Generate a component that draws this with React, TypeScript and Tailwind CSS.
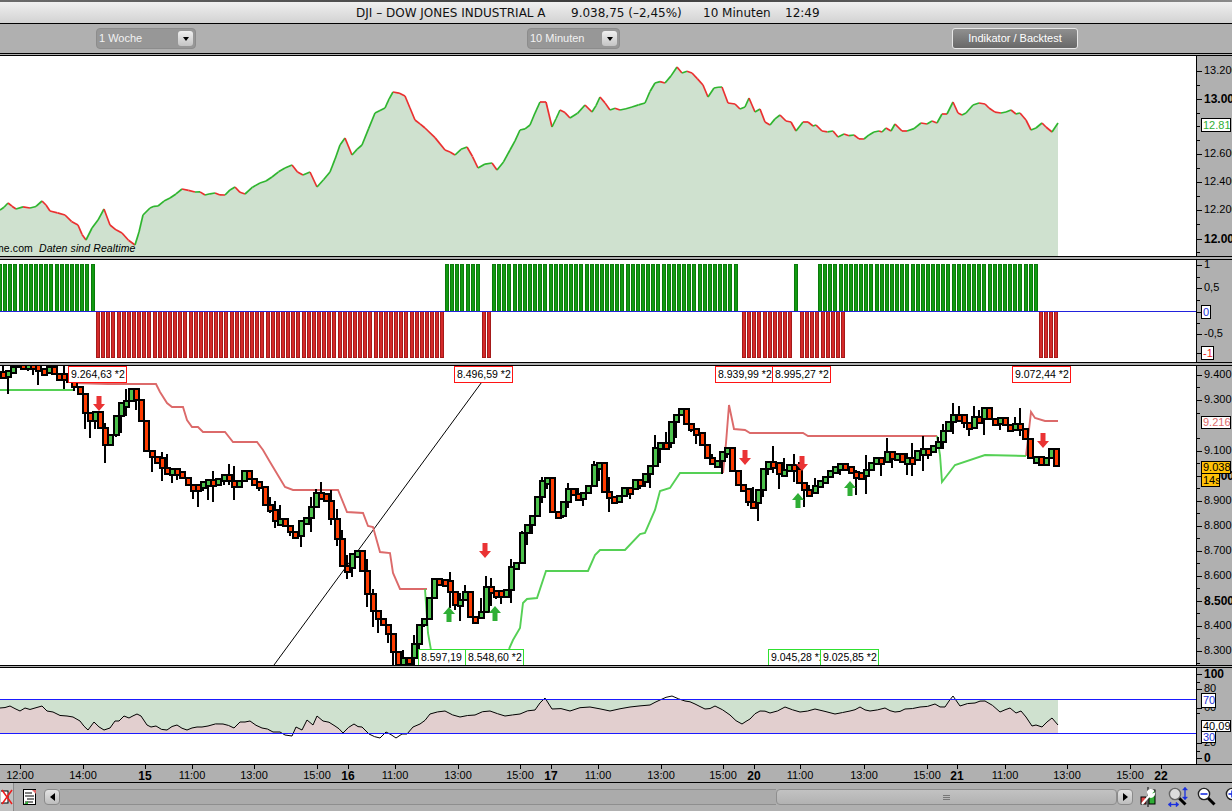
import type { ReactNode } from "react";

// chart data is in page pixels, each svg viewBox just maps to the pane's y range
type Pt = [number, number];

const PRICE: Pt[] = [
  [0, 210], [8, 203], [16, 209], [30, 208], [42, 201], [50, 211], [65, 215], [78, 225], [86, 240], [92, 228], [104, 209], [110, 225],
  [122, 233], [135, 245], [143, 215], [150, 208], [158, 206], [170, 198], [182, 189], [195, 192], [205, 195], [215, 193], [225, 195],
  [235, 187], [245, 194], [260, 183], [272, 177], [285, 168], [292, 165], [303, 175], [310, 172], [317, 187], [330, 172], [340, 145],
  [345, 138], [352, 155], [362, 145], [375, 113], [385, 108], [393, 92], [405, 96], [415, 120], [425, 128], [445, 150], [455, 155],
  [467, 147], [478, 168], [492, 163], [497, 170], [510, 150], [520, 130], [530, 125], [540, 102], [546, 102], [552, 127], [560, 110],
  [570, 118], [585, 105], [592, 112], [600, 97], [610, 110], [620, 110], [632, 107], [645, 103], [655, 83], [665, 83], [677, 67],
  [682, 73], [692, 73], [703, 85], [708, 97], [714, 88], [722, 87], [728, 103], [735, 104], [740, 109], [745, 107], [749, 98],
  [755, 112], [760, 109], [765, 122], [770, 125], [780, 115], [786, 121], [791, 122], [796, 131], [803, 122], [808, 122], [813, 126],
  [816, 125], [822, 131], [833, 131], [838, 137], [844, 134], [854, 135], [864, 139], [874, 132], [879, 131], [882, 132], [886, 128],
  [891, 131], [895, 124], [902, 131], [907, 131], [921, 123], [927, 124], [932, 121], [937, 123], [942, 114], [947, 114], [953, 102],
  [958, 113], [966, 113], [973, 105], [979, 103], [985, 104], [989, 108], [1001, 113], [1011, 110], [1016, 114], [1020, 113], [1026, 120],
  [1031, 130], [1036, 128], [1042, 123], [1046, 127], [1052, 132], [1058, 123],
];

const CLOSES: Pt[] = [
  [0, 372], [20, 364], [40, 366], [60, 372], [72, 378], [80, 392], [88, 430], [94, 408], [99, 422], [104, 450], [109, 443], [114, 417],
  [124, 399], [131, 392], [137, 399], [146, 448], [150, 450], [155, 458], [165, 475], [175, 465], [185, 487], [195, 485], [205, 483],
  [215, 480], [225, 478], [235, 490], [245, 473], [258, 480], [265, 503], [275, 520], [285, 525], [292, 538], [302, 520], [310, 510],
  [318, 493], [325, 495], [332, 525], [340, 555], [345, 580], [350, 560], [358, 550], [366, 590], [375, 620], [385, 625], [392, 650],
  [398, 662], [405, 660], [412, 650], [418, 630], [425, 620], [432, 578], [440, 578], [448, 583], [452, 605], [458, 600], [465, 590],
  [470, 615], [480, 613], [487, 577], [492, 590], [500, 595], [505, 600], [510, 570], [518, 565], [522, 530], [530, 520], [540, 482],
  [548, 482], [555, 528], [565, 490], [575, 495], [585, 495], [592, 470], [600, 465], [605, 495], [615, 498], [625, 490], [640, 482],
  [650, 470], [655, 450], [665, 440], [675, 415], [682, 410], [690, 430], [700, 440], [706, 460], [715, 468], [722, 455], [728, 452],
  [735, 480], [742, 490], [750, 512], [757, 490], [765, 465], [775, 460], [780, 477], [790, 465], [797, 470], [802, 495], [810, 490],
  [820, 483], [828, 472], [840, 465], [850, 470], [862, 472], [875, 462], [890, 455], [902, 460], [910, 457], [920, 450], [935, 445],
  [945, 430], [955, 410], [965, 428], [975, 420], [985, 410], [995, 420], [1005, 425], [1020, 428], [1026, 440], [1031, 460], [1036, 457],
  [1041, 465], [1046, 458], [1051, 449], [1056, 466],
];

const RED_STOP: Pt[][] = [
  [[72, 383], [108, 384], [156, 384], [160, 392], [167, 403], [172, 407], [183, 407], [187, 420], [192, 427], [198, 427], [203, 432], [225, 432],
    [233, 442], [257, 442], [263, 450], [270, 462], [285, 487], [293, 490], [338, 490], [347, 512], [363, 513], [368, 526], [373, 527], [380, 552],
    [390, 553], [393, 573], [400, 589], [427, 589]],
  [[723, 473], [726, 443], [729, 405], [734, 429], [745, 430], [750, 433], [803, 433], [808, 436], [937, 436]],
  [[1026, 456], [1031, 412], [1035, 418], [1045, 421], [1058, 421]],
];

const GREEN_STOP: Pt[][] = [
  [[0, 390], [73, 390]],
  [[425, 589], [428, 633], [431, 650], [431, 665]],
  [[509, 649], [513, 640], [520, 628], [523, 603], [527, 599], [537, 598], [546, 571], [588, 571], [595, 555], [600, 550], [625, 550], [640, 534],
    [645, 533], [655, 510], [660, 491], [670, 488], [680, 473], [723, 473]],
  [[937, 436], [940, 455], [942, 482], [955, 465], [985, 455], [1026, 456]],
];

const OSC: Pt[] = [
  [0, 709], [10, 707], [20, 712], [25, 709], [35, 709], [42, 707], [47, 712], [53, 713], [67, 717], [73, 718], [80, 722], [88, 731], [94, 723],
  [104, 731], [110, 729], [115, 722], [119, 722], [124, 717], [129, 719], [137, 715], [141, 717], [147, 726], [151, 728], [156, 727], [167, 731],
  [177, 726], [187, 731], [197, 728], [202, 728], [208, 727], [223, 725], [234, 729], [240, 723], [250, 722], [262, 729], [273, 733], [280, 733],
  [285, 736], [292, 737], [296, 728], [302, 731], [307, 721], [313, 726], [317, 717], [323, 722], [335, 727], [343, 734], [354, 725], [362, 728],
  [369, 735], [380, 739], [386, 733], [396, 739], [402, 735], [407, 735], [413, 728], [420, 725], [430, 715], [445, 712], [460, 718], [475, 716],
  [490, 712], [505, 717], [520, 715], [535, 711], [545, 699], [552, 710], [570, 712], [590, 708], [610, 712], [630, 708], [650, 706], [660, 701],
  [672, 697], [685, 702], [695, 705], [705, 710], [715, 707], [730, 716], [742, 725], [750, 720], [760, 712], [770, 714], [785, 708], [800, 713],
  [815, 710], [835, 715], [850, 712], [860, 708], [870, 712], [885, 709], [895, 713], [905, 710], [920, 708], [935, 705], [945, 708], [953, 697],
  [960, 707], [975, 704], [985, 702], [1000, 713], [1010, 709], [1016, 714], [1021, 712], [1026, 718], [1032, 727], [1036, 726], [1042, 728],
  [1052, 719], [1058, 726],
];

const BAR_STEP = 5.14;
// green (top) and red (bottom) runs overlap at 818-845, that is how the reference has it
const BAR_RANGES: { from: number; to: number; up: boolean }[] = [
  { from: -2, to: 95, up: true },
  { from: 96, to: 444, up: false },
  { from: 445, to: 481, up: true },
  { from: 482, to: 491, up: false },
  { from: 492, to: 741, up: true },
  { from: 742, to: 793, up: false },
  { from: 794, to: 798, up: true },
  { from: 800, to: 845, up: false },
  { from: 818, to: 1038, up: true },
  { from: 1039, to: 1059, up: false },
];

function toPoints(p: Pt[]) {
  return p.map(([x, y]) => `${x},${y}`).join(" ");
}

function interp(p: Pt[], x: number) {
  for (let i = 1; i < p.length; i++) {
    if (x <= p[i][0]) {
      const [x0, y0] = p[i - 1];
      const [x1, y1] = p[i];
      return y0 + ((y1 - y0) * (x - x0)) / (x1 - x0);
    }
  }
  return p[p.length - 1][1];
}

function noise(i: number) {
  const s = Math.sin(i * 127.1 + 11.7) * 43758.5453;
  return s - Math.floor(s);
}

// long segments get a midpoint so the line is as jagged as the real one
function roughen(p: Pt[], amp: number) {
  const out: Pt[] = [];
  p.forEach(([x, y], i) => {
    if (i > 0) {
      const [px, py] = p[i - 1];
      if (x - px > 7) {
        out.push([(x + px) / 2, (y + py) / 2 + (noise(i) - 0.5) * amp]);
      }
    }
    out.push([x, y]);
  });
  return out;
}

function buildCandles() {
  const out: { x: number; top: number; bottom: number; hi: number; lo: number; up: boolean }[] = [];
  let prev = interp(CLOSES, 0);
  for (let x = 2.5; x < 1058; x += BAR_STEP) {
    const i = out.length;
    // the last few candles are read straight off the picture, no jitter
    const close = Math.round(interp(CLOSES, x) + (x > 1022 ? 0 : (noise(i) - 0.5) * 9));
    const up = close < prev;
    const top = Math.round(Math.min(prev, close));
    let bottom = Math.round(Math.max(prev, close));
    if (bottom - top < 6) bottom = top + 6;
    const hi = top - (x < 1022 && noise(i + 300) > 0.6 ? noise(i + 600) * 16 : 1);
    const lo = bottom + (x < 1022 && noise(i + 900) > 0.55 ? noise(i + 1200) * 18 : 1);
    out.push({ x: Math.round(x), top, bottom, hi, lo, up });
    prev = close;
  }
  return out;
}

function buildBars() {
  const out: { x: number; up: boolean }[] = [];
  for (const r of BAR_RANGES) {
    for (let x = r.from; x + 3.5 <= r.to; x += BAR_STEP) {
      out.push({ x: Math.round(x), up: r.up });
    }
  }
  return out;
}

function Tag({ left, width, top, red, children }: { left: number; width: number; top: number; red?: boolean; children: ReactNode }) {
  return (
    <div
      className={`absolute flex h-[17px] items-center overflow-hidden whitespace-nowrap border bg-white pl-[2px] text-[10.5px] leading-none text-black ${red ? "border-[#ff1414]" : "border-[#30e030]"}`}
      style={{ left, width, top }}
    >
      {children}
    </div>
  );
}

function Arrow({ x, y, up }: { x: number; y: number; up?: boolean }) {
  // x is the centre, y the top of the 15px arrow
  const pts = up
    ? `${x},${y} ${x + 6},${y + 7} ${x + 2.5},${y + 7} ${x + 2.5},${y + 15} ${x - 2.5},${y + 15} ${x - 2.5},${y + 7} ${x - 6},${y + 7}`
    : `${x},${y + 15} ${x + 6},${y + 8} ${x + 2.5},${y + 8} ${x + 2.5},${y} ${x - 2.5},${y} ${x - 2.5},${y + 8} ${x - 6},${y + 8}`;
  return <polygon points={pts} fill={up ? "#2fae35" : "#ea3334"} />;
}

function AxisLabel({ y, bold, children }: { y: number; bold?: boolean; children: ReactNode }) {
  return (
    <>
      <div className="absolute left-0 h-px w-[5px] bg-black" style={{ top: y }} />
      <div
        className={`absolute left-[7px] whitespace-nowrap leading-none text-black ${bold ? "text-[12px] font-bold" : "text-[11px]"}`}
        style={{ top: y - 6 }}
      >
        {children}
      </div>
    </>
  );
}

function Tick({ y }: { y: number }) {
  return <div className="absolute left-0 h-px w-[3px] bg-black" style={{ top: y }} />;
}

function AxisTag({ y, h, w, color, bg, children }: { y: number; h: number; w: number; color: string; bg?: string; children: ReactNode }) {
  return (
    <div
      className="absolute left-[4px] flex items-center overflow-hidden whitespace-nowrap border border-black pl-px text-[11px] leading-none"
      style={{ top: y, height: h, width: w, color, background: bg ?? "#fff" }}
    >
      {children}
    </div>
  );
}

// y values are page pixels, the axis column starts at pane top
function Pane({ height, top, axis, children }: { height: number; top: number; axis: ReactNode; children: ReactNode }) {
  return (
    <div className="flex border-y border-black" style={{ height }}>
      <div className="relative w-[1197px] overflow-hidden border-r border-black bg-white">{children}</div>
      <div className="relative flex-1 overflow-hidden">
        <div className="absolute left-0 w-full" style={{ top: -top, height: 900 }}>
          {axis}
        </div>
      </div>
    </div>
  );
}

function Select({ label, className }: { label: string; className: string }) {
  return (
    <div className={`flex h-[21px] items-center justify-between rounded-[4px] border border-[#8c8c8c] bg-[#979797] pl-[2px] pr-[2px] text-[11px] text-[#f2f2f2] ${className}`}>
      <span>{label}</span>
      <span className="flex h-[15px] w-[15px] items-center justify-center rounded-[3px] bg-gradient-to-b from-[#f0f0f0] to-[#c4c4c4]">
        <span className="h-0 w-0 border-x-[3px] border-t-[4px] border-x-transparent border-t-black" />
      </span>
    </div>
  );
}

const TIMES: { x: number; t: string; bold?: boolean }[] = [
  { x: 20, t: "12:00" }, { x: 83, t: "14:00" }, { x: 145, t: "15", bold: true }, { x: 192, t: "11:00" }, { x: 254, t: "13:00" }, { x: 317, t: "15:00" },
  { x: 348, t: "16", bold: true }, { x: 395, t: "11:00" }, { x: 458, t: "13:00" }, { x: 520, t: "15:00" }, { x: 551, t: "17", bold: true }, { x: 598, t: "11:00" },
  { x: 661, t: "13:00" }, { x: 723, t: "15:00" }, { x: 754, t: "20", bold: true }, { x: 800, t: "11:00" }, { x: 864, t: "13:00" }, { x: 927, t: "15:00" },
  { x: 957, t: "21", bold: true }, { x: 1005, t: "11:00" }, { x: 1067, t: "13:00" }, { x: 1130, t: "15:00" }, { x: 1161, t: "22", bold: true },
];

function ScrollArrow({ dir }: { dir: "left" | "right" }) {
  return (
    <div className="flex h-[16px] w-[16px] shrink-0 items-center justify-center rounded-[4px] border border-[#8a8a8a] bg-gradient-to-b from-[#e4e4e4] to-[#bdbdbd]">
      <span className={`h-0 w-0 border-y-[4px] border-y-transparent ${dir === "left" ? "border-r-[5px] border-r-black" : "border-l-[5px] border-l-black"}`} />
    </div>
  );
}

function Magnifier({ sign }: { sign: "arrows" | "minus" | "plus" }) {
  const grey = sign === "arrows";
  return (
    <svg width="22" height="20" viewBox="0 0 22 20" className="shrink-0">
      <line x1="11" y1="11" x2="17.5" y2="17.5" stroke="#000" strokeWidth="3" />
      <circle cx="7" cy="7" r="5.6" fill={grey ? "#dcdcdc" : "#fff"} stroke={grey ? "#666" : "#222"} strokeWidth="1.4" />
      {sign !== "arrows" && <line x1="3.5" y1="7" x2="10.5" y2="7" stroke="#1a2fe0" strokeWidth="1.6" />}
      {sign === "plus" && <line x1="7" y1="3.5" x2="7" y2="10.5" stroke="#1a2fe0" strokeWidth="1.6" />}
      {grey && (
        <g stroke="#1a2fe0" strokeWidth="1.3" fill="#1a2fe0">
          <line x1="1" y1="17.5" x2="10" y2="17.5" />
          <path d="M0 17.5 L3 15 V20 Z M11 17.5 L8 15 V20 Z" strokeWidth="0.4" />
          <line x1="17" y1="1" x2="17" y2="12" />
          <path d="M17 0 L14.5 3 H19.5 Z M17 13 L14.5 10 H19.5 Z" strokeWidth="0.4" />
        </g>
      )}
    </svg>
  );
}

export default function App() {
  const candles = buildCandles();
  const bars = buildBars();
  const price = roughen(PRICE, 4);
  const osc = roughen(OSC, 3);
  const priceArea = `0,257 ${toPoints(price)} 1058,257`;
  const oscArea = `0,740 ${toPoints(osc)} 1058,740`;

  return (
    <div className="flex h-[811px] w-[1232px] flex-col overflow-hidden bg-[#b0b0b0] font-['Liberation_Sans',Arial,sans-serif]">
      {/* window title */}
      <div className="h-[2px] bg-gradient-to-r from-[#6b6b6b] via-[#3a3a3a] to-[#8a8a8a]" />
      <div className="flex h-[22px] items-center whitespace-pre border-b border-black bg-gradient-to-b from-[#f0f0f0] to-[#d2d2d2] pl-[356px] font-['DejaVu_Sans',sans-serif] text-[12px] text-[#111]">
        <span className="w-[215px] shrink-0">DJI – DOW JONES INDUSTRIAL A</span>
        <span className="w-[132px] shrink-0">9.038,75 (–2,45%)</span>
        <span className="w-[82px] shrink-0">10 Minuten</span>
        <span>12:49</span>
      </div>

      {/* toolbar */}
      <div className="flex h-[30px] items-center border-b border-black pl-[96px]">
        <Select label="1 Woche" className="w-[100px]" />
        <Select label="10 Minuten" className="ml-[331px] w-[93px]" />
        <button
          type="button"
          className="ml-[332px] h-[21px] w-[126px] rounded-[3px] border border-[#e8e8e8] bg-gradient-to-b from-[#909090] to-[#686868] text-[11px] text-white"
        >
          Indikator / Backtest
        </button>
      </div>
      <div className="h-[1px]" />

      {/* price pane */}
      <Pane
        height={202}
        top={55}
        axis={
          <>
            {[84, 112, 125, 139, 167, 195, 223, 251].map((y) => (
              <Tick key={y} y={y} />
            ))}
            <AxisLabel y={70}>13.200</AxisLabel>
            <AxisLabel y={98} bold>13.000</AxisLabel>
            <AxisLabel y={153}>12.600</AxisLabel>
            <AxisLabel y={181}>12.400</AxisLabel>
            <AxisLabel y={209}>12.200</AxisLabel>
            <AxisLabel y={238} bold>12.000</AxisLabel>
            <AxisTag y={117} h={14} w={30} color="#2fae35">12.810</AxisTag>
          </>
        }
      >
        <svg width="1197" height="200" viewBox="0 56 1197 200" className="block">
          <polygon points={priceArea} fill="#cfe1cf" />
          {price.slice(1).map(([x, y], i) => {
            const [px, py] = price[i];
            return <line key={x} x1={px} y1={py} x2={x} y2={y} stroke={y < py ? "#2fb52f" : "#ea3030"} strokeWidth="1.7" />;
          })}
        </svg>
        <div className="absolute left-[-5px] top-[187px] whitespace-pre text-[10.5px] italic leading-none tracking-[0.1px] text-black">
          <span className="not-italic">me.com</span>{"  "}Daten sind Realtime
        </div>
      </Pane>
      <div className="h-[2px]" />

      {/* signal bars */}
      <Pane
        height={104}
        top={259}
        axis={
          <>
            <AxisLabel y={264}>1</AxisLabel>
            <AxisLabel y={287}>0,5</AxisLabel>
            <Tick y={276} />
            <Tick y={299} />
            <Tick y={322} />
            <AxisLabel y={333}>-0,5</AxisLabel>
            <div className="absolute left-0 h-px w-[5px] bg-black" style={{ top: 311 }} />
            <AxisTag y={304} h={14} w={10} color="#2332d8">0</AxisTag>
            <div className="absolute left-0 h-px w-[5px] bg-black" style={{ top: 352 }} />
            <AxisTag y={345} h={14} w={13} color="#ee1c1c">-1</AxisTag>
          </>
        }
      >
        <svg width="1197" height="102" viewBox="0 260 1197 102" className="block" shapeRendering="crispEdges">
          {bars.map((b) =>
            b.up ? (
              <rect key={`u${b.x}`} x={b.x + 0.5} y={264.5} width={3} height={47} fill="#119a11" stroke="#0b7a0b" />
            ) : (
              <rect key={`d${b.x}`} x={b.x + 0.5} y={311.5} width={3} height={46} fill="#d42a2a" stroke="#a51a1a" />
            ),
          )}
          <rect x="0" y="311" width="1197" height="1" fill="#2222dd" />
        </svg>
      </Pane>
      <div className="h-[2px]" />

      {/* candles */}
      <Pane
        height={301}
        top={365}
        axis={
          <>
            {[386, 412, 437, 462, 487, 512, 537, 562, 587, 612, 637, 662].map((y) => (
              <Tick key={y} y={y} />
            ))}
            <AxisLabel y={374}>9.400</AxisLabel>
            <AxisLabel y={399}>9.300</AxisLabel>
            <AxisLabel y={450}>9.100</AxisLabel>
            <AxisLabel y={475} bold>9.000</AxisLabel>
            <AxisLabel y={500}>8.900</AxisLabel>
            <AxisLabel y={525}>8.800</AxisLabel>
            <AxisLabel y={550}>8.700</AxisLabel>
            <AxisLabel y={575}>8.600</AxisLabel>
            <AxisLabel y={600} bold>8.500</AxisLabel>
            <AxisLabel y={625}>8.400</AxisLabel>
            <AxisLabel y={650}>8.300</AxisLabel>
            <AxisTag y={415} h={13} w={30} color="#dc6a6a">9.216</AxisTag>
            <AxisTag y={460} h={13} w={30} color="#000" bg="#ffc107">9.038</AxisTag>
            <AxisTag y={472} h={14} w={19} color="#000" bg="#ffc107">14s</AxisTag>
          </>
        }
      >
        <svg width="1197" height="299" viewBox="0 366 1197 299" className="block">
          <line x1="274" y1="665" x2="487" y2="375" stroke="#000" strokeWidth="1" />
          {RED_STOP.map((s) => (
            <polyline key={s[0][0]} points={toPoints(s)} fill="none" stroke="#dc6a6a" strokeWidth="1.9" />
          ))}
          {GREEN_STOP.map((s) => (
            <polyline key={s[0][0]} points={toPoints(s)} fill="none" stroke="#55d055" strokeWidth="1.9" />
          ))}
          <g shapeRendering="crispEdges">
            {candles.map((c) => (
              <g key={c.x}>
                <rect x={c.x - 1} y={c.hi} width={2} height={c.lo - c.hi} fill="#000" />
                <rect x={c.x - 3} y={c.top - 1} width={7} height={c.bottom - c.top + 2} fill="#000" />
                <rect x={c.x - 1} y={c.top + 1} width={3} height={Math.max(1, c.bottom - c.top - 2)} fill={c.up ? "#4cc24c" : "#ff3c00"} />
              </g>
            ))}
          </g>
          <Arrow x={99} y={396} />
          <Arrow x={485} y={543} />
          <Arrow x={745} y={450} />
          <Arrow x={802} y={456} />
          <Arrow x={1043} y={433} />
          <Arrow x={449} y={607} up />
          <Arrow x={495} y={606} up />
          <Arrow x={798} y={493} up />
          <Arrow x={850} y={481} up />
        </svg>
        <Tag left={68} width={59} top={0} red>9.264,63 *2</Tag>
        <Tag left={454} width={59} top={0} red>8.496,59 *2</Tag>
        <Tag left={715} width={58} top={0} red>8.939,99 *2</Tag>
        <Tag left={772} width={59} top={0} red>8.995,27 *2</Tag>
        <Tag left={1012} width={59} top={0} red>9.072,44 *2</Tag>
        <Tag left={418} width={48} top={283}>8.597,19</Tag>
        <Tag left={465} width={59} top={283}>8.548,60 *2</Tag>
        <Tag left={768} width={53} top={283}>9.045,28 *2</Tag>
        <Tag left={820} width={59} top={283}>9.025,85 *2</Tag>
      </Pane>

      <div className="h-[1px]" />

      {/* oscillator */}
      <Pane
        height={98}
        top={668}
        axis={
          <>
            {[682, 713, 751].map((y) => (
              <Tick key={y} y={y} />
            ))}
            <AxisLabel y={674} bold>100</AxisLabel>
            <AxisLabel y={689}>80</AxisLabel>
            <AxisLabel y={708}>60</AxisLabel>
            <AxisLabel y={743}>20</AxisLabel>
            <AxisLabel y={758} bold>0</AxisLabel>
            <AxisTag y={693} h={15} w={15} color="#2332d8">70</AxisTag>
            <AxisTag y={731} h={12} w={15} color="#2332d8">30</AxisTag>
            <AxisTag y={720} h={12} w={30} color="#000">40,095</AxisTag>
          </>
        }
      >
        <svg width="1197" height="96" viewBox="0 669 1197 96" className="block" shapeRendering="crispEdges">
          <defs>
            <clipPath id="band">
              <rect x="0" y="700" width="1058" height="34" />
            </clipPath>
          </defs>
          <rect x="0" y="700" width="1058" height="34" fill="#cfe1cf" />
          <polygon points={oscArea} fill="#e2cfcf" clipPath="url(#band)" />
          <polyline points={toPoints(osc)} fill="none" stroke="#000" strokeWidth="1" shapeRendering="auto" />
          <rect x="0" y="700" width="1197" height="1" fill="#1a1aff" />
          <rect x="0" y="734" width="1197" height="1" fill="#1a1aff" />
        </svg>
      </Pane>

      {/* time axis */}
      <div className="relative h-[18px] border-b border-black">
        {TIMES.map((t) => (
          <div key={`${t.x}${t.t}`}>
            <div className="absolute top-0 h-[4px] w-px bg-black" style={{ left: t.x }} />
            <div
              className={`absolute top-[5px] w-[40px] -translate-x-1/2 text-center leading-none text-black ${t.bold ? "text-[12px] font-bold" : "text-[11px]"}`}
              style={{ left: t.x }}
            >
              {t.t}
            </div>
          </div>
        ))}
      </div>

      {/* bottom bar */}
      <div className="flex flex-1 items-center overflow-hidden">
        <div className="flex h-full w-[14px] shrink-0 items-center justify-end overflow-hidden border-r border-[#8a8a8a] bg-[#c0c0c0]">
          <svg width="12" height="16" viewBox="0 0 12 16" className="shrink-0">
            <rect x="-4" y="2" width="11" height="12" fill="#fff" stroke="#000" />
            <path d="M1 1 L11 15 M11 1 L1 15" stroke="#ee1c1c" strokeWidth="1.5" />
          </svg>
        </div>
        <svg width="14" height="16" viewBox="0 0 14 16" className="ml-[9px] shrink-0">
          <rect x="0.5" y="0.5" width="12" height="15" fill="#fff" stroke="#000" />
          <path d="M2 4h7M2 7h9M4 10h7M2 13h8" stroke="#000" />
          <path d="M9 1h4v4z" fill="#d66" />
          <path d="M1 15h4v-3z" fill="#2fae35" />
        </svg>
        <div className="ml-[7px] flex h-[16px] w-[1089px] shrink-0 items-center">
          <ScrollArrow dir="left" />
          <div className="h-[16px] w-[716px] shrink-0 border-y border-[#8e8e8e] bg-[#ababab]" />
          <div className="flex h-[16px] flex-1 flex-col items-center justify-center gap-px rounded-[4px] border border-[#8e8e8e] bg-gradient-to-b from-[#c2c2c2] to-[#b2b2b2]">
            <span className="h-px w-[7px] bg-[#777]" />
            <span className="h-px w-[7px] bg-[#777]" />
            <span className="h-px w-[7px] bg-[#777]" />
          </div>
          <ScrollArrow dir="right" />
        </div>
        <svg width="16" height="20" viewBox="0 0 16 20" className="ml-[7px] shrink-0">
          <line x1="8" y1="0" x2="8" y2="20" stroke="#000" />
          <rect x="1" y="10" width="5" height="7" fill="#d44" stroke="#000" />
          <rect x="9" y="3" width="6" height="14" fill="#2fae35" stroke="#000" />
          <path d="M2 17 L9 9 M8 5 a3 3 0 0 1 5 -1 l-2 2 l1 2 l2 -1 a3 3 0 0 1 -5 2 z" stroke="#fff" strokeWidth="2.2" fill="#fff" />
        </svg>
        <div className="ml-[12px] shrink-0">
          <Magnifier sign="arrows" />
        </div>
        <div className="ml-[7px] shrink-0">
          <Magnifier sign="minus" />
        </div>
        <div className="ml-[6px] shrink-0">
          <Magnifier sign="plus" />
        </div>
      </div>
    </div>
  );
}
